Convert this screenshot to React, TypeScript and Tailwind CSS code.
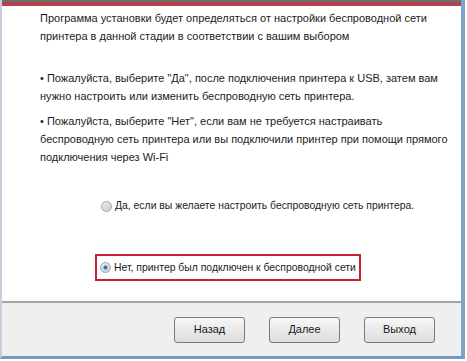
import React from 'react';

const Radio: React.FC<{ checked?: boolean }> = ({ checked }) => (
  <span className="relative inline-block w-[11px] h-[11px] rounded-full border border-[#9aa4ae] bg-gradient-to-br from-[#e8ecf0] to-[#c9d0d6] shrink-0">
    {checked && (
      <span className="absolute left-[2px] top-[2px] w-[5px] h-[5px] rounded-full bg-[#2d5f94] border border-[#8fb4d8]" />
    )}
  </span>
);

const WizardButton: React.FC<{ label: string }> = ({ label }) => (
  <button className="w-[71px] h-[26px] rounded-[3px] border border-[#7a7a7a] bg-gradient-to-b from-[#f7f7f7] to-[#dcdcdc] text-[11px] text-[#1a1a1a]">
    {label}
  </button>
);

const App: React.FC = () => {
  return (
    <div
      className="w-[467px] h-[361px] bg-white overflow-hidden"
      style={{ fontFamily: '"Liberation Sans", "DejaVu Sans", sans-serif' }}
    >
      <div className="w-[465px] h-[359px] flex flex-col border-l-2 border-l-[#c3cfdb] border-r-4 border-r-[#7ea4c8] border-b-[3px] border-b-[#6e9bc7]">
        <div className="h-[2px] bg-[#6e6e6e]" />
        <div className="h-[4px] bg-[#b3424b]" />

        <div className="flex-1 bg-white pl-[38px] pt-[3px] text-[11px] leading-[18px] text-[#1c1c1c]">
          <p>
            Программа установки будет определяться от настройки беспроводной сети
            <br />
            принтера в данной стадии в соответствии с вашим выбором
          </p>
          <p className="mt-[24px]">
            • Пожалуйста, выберите "Да", после подключения принтера к USB, затем вам
            <br />
            нужно настроить или изменить беспроводную сеть принтера.
          </p>
          <p className="mt-[7px]">
            • Пожалуйста, выберите "Нет", если вам не требуется настраивать
            <br />
            беспроводную сеть принтера или вы подключили принтер при помощи прямого
            <br />
            подключения через Wi-Fi
          </p>

          <div className="mt-[31px] ml-[61px] flex items-center gap-[3px] text-[10.4px] whitespace-nowrap">
            <Radio />
            <span>Да, если вы желаете настроить беспроводную сеть принтера.</span>
          </div>

          <div className="mt-[39px] ml-[55px] w-[266px] h-[27px] border-2 border-[#c4232f] flex items-center gap-[3px] pl-[3px] text-[10.4px] whitespace-nowrap">
            <Radio checked />
            <span>Нет, принтер был подключен к беспроводной сети</span>
          </div>
        </div>

        <div className="h-[2px] bg-[#a3a3a3]" />
        <div className="h-[53px] bg-[#efefef] flex items-center justify-end gap-[24px] pr-[26px]">
          <WizardButton label="Назад" />
          <WizardButton label="Далее" />
          <WizardButton label="Выход" />
        </div>
      </div>
    </div>
  );
};

export default App;
